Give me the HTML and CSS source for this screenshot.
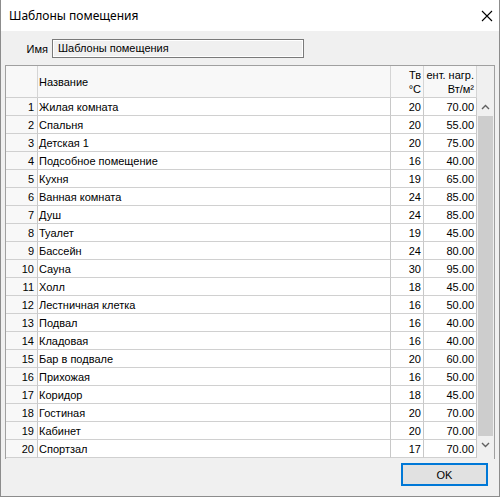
FILE: index.html
```html
<!DOCTYPE html>
<html>
<head>
<meta charset="utf-8">
<link rel="stylesheet" href="styles.css">
</head>
<body>
<div class="window">
  <div class="titlebar">
    <span class="title">Шаблоны помещения</span>
    <svg class="close" width="12" height="12" viewBox="0 0 12 12"><path d="M1 1 L11 11 M11 1 L1 11" stroke="#000" stroke-width="1.1" fill="none"/></svg>
  </div>
  <div class="body">
    <div class="name-row">
      <span class="name-label">Имя</span>
      <div class="name-input">Шаблоны помещения</div>
    </div>
    <div class="grid">
      <div class="table">
        <div class="hdr num"></div>
        <div class="hdr name">Название</div>
        <div class="hdr t">Тв<br>°С</div>
        <div class="hdr load">ент. нагр.<br>Вт/м²</div>

        <div class="c num">1</div><div class="c name">Жилая комната</div><div class="c t">20</div><div class="c load">70.00</div>
        <div class="c num">2</div><div class="c name">Спальня</div><div class="c t">20</div><div class="c load">55.00</div>
        <div class="c num">3</div><div class="c name">Детская 1</div><div class="c t">20</div><div class="c load">75.00</div>
        <div class="c num">4</div><div class="c name">Подсобное помещение</div><div class="c t">16</div><div class="c load">40.00</div>
        <div class="c num">5</div><div class="c name">Кухня</div><div class="c t">19</div><div class="c load">65.00</div>
        <div class="c num">6</div><div class="c name">Ванная комната</div><div class="c t">24</div><div class="c load">85.00</div>
        <div class="c num">7</div><div class="c name">Душ</div><div class="c t">24</div><div class="c load">85.00</div>
        <div class="c num">8</div><div class="c name">Туалет</div><div class="c t">19</div><div class="c load">45.00</div>
        <div class="c num">9</div><div class="c name">Бассейн</div><div class="c t">24</div><div class="c load">80.00</div>
        <div class="c num">10</div><div class="c name">Сауна</div><div class="c t">30</div><div class="c load">95.00</div>
        <div class="c num">11</div><div class="c name">Холл</div><div class="c t">18</div><div class="c load">45.00</div>
        <div class="c num">12</div><div class="c name">Лестничная клетка</div><div class="c t">16</div><div class="c load">50.00</div>
        <div class="c num">13</div><div class="c name">Подвал</div><div class="c t">16</div><div class="c load">40.00</div>
        <div class="c num">14</div><div class="c name">Кладовая</div><div class="c t">16</div><div class="c load">40.00</div>
        <div class="c num">15</div><div class="c name">Бар в подвале</div><div class="c t">20</div><div class="c load">60.00</div>
        <div class="c num">16</div><div class="c name">Прихожая</div><div class="c t">16</div><div class="c load">50.00</div>
        <div class="c num">17</div><div class="c name">Коридор</div><div class="c t">18</div><div class="c load">45.00</div>
        <div class="c num">18</div><div class="c name">Гостиная</div><div class="c t">20</div><div class="c load">70.00</div>
        <div class="c num">19</div><div class="c name">Кабинет</div><div class="c t">20</div><div class="c load">70.00</div>
        <div class="c num">20</div><div class="c name">Спортзал</div><div class="c t">17</div><div class="c load">70.00</div>
      </div>
      <div class="scrollbar">
        <div class="sb-top"></div>
        <div class="sb-btn"><svg width="9" height="6" viewBox="0 0 9 6"><path d="M1 5 L4.5 1.5 L8 5" stroke="#606060" stroke-width="1.4" fill="none"/></svg></div>
        <div class="sb-track"><div class="sb-thumb"></div></div>
        <div class="sb-btn"><svg width="9" height="6" viewBox="0 0 9 6"><path d="M1 1 L4.5 4.5 L8 1" stroke="#606060" stroke-width="1.4" fill="none"/></svg></div>
      </div>
    </div>
    <div class="footer">
      <button class="ok">OK</button>
    </div>
  </div>
</div>
</body>
</html>
```
FILE: styles.css
```css
html, body {
  margin: 0;
  padding: 0;
  background: #f0f0f0;
}
.window {
  width: 500px;
  height: 497px;
  box-sizing: border-box;
  border: 1px solid #8c8c8c;
  border-top: none;
  display: flex;
  flex-direction: column;
  background: #f0f0f0;
  font-family: "Liberation Sans", Arial, sans-serif;
}
.titlebar {
  height: 31px;
  flex: none;
  background: #fff;
  display: flex;
  align-items: center;
  justify-content: space-between;
  padding: 0 6px 0 8px;
}
.title {
  font-family: "Noto Sans", sans-serif;
  font-size: 12px;
  color: #000;
}
.body {
  flex: 1;
  display: flex;
  flex-direction: column;
  padding: 7px 4px 0 4px;
}
.name-row {
  display: flex;
  align-items: center;
  height: 21px;
}
.name-label {
  font-size: 11px;
  width: 43px;
  text-align: right;
  padding-right: 4px;
  color: #000;
}
.name-input {
  width: 245px;
  height: 17px;
  border: 1px solid #7a7a7a;
  box-shadow: inset 0 0 0 1px #fff;
  font-size: 11px;
  line-height: 17px;
  padding-left: 5px;
  color: #000;
}
.grid {
  margin-top: 6px;
  height: 393px;
  display: flex;
  border: 1px solid #a0a0a0;
  border-bottom: none;
  background: #f0f0f0;
}
.table {
  display: grid;
  grid-template-columns: 32px 353px 33px 53px;
  grid-template-rows: 32px repeat(20, 18px);
  align-content: start;
  font-size: 11px;
  color: #000;
}
.hdr {
  background: #f8f8f8;
  border-right: 1px solid #d5d5d5;
  border-bottom: 1px solid #d0d0d0;
  box-sizing: border-box;
  line-height: 14px;
  display: flex;
  flex-direction: column;
  justify-content: center;
  white-space: nowrap;
  overflow: hidden;
}
.hdr.name {
  padding-left: 1px;
}
.hdr.t, .hdr.load {
  text-align: right;
  padding-right: 2px;
  align-items: flex-end;
}
.c {
  background: #fff;
  border-right: 1px solid #c8c8c8;
  border-bottom: 1px solid #d0d0d0;
  box-sizing: border-box;
  line-height: 17px;
  padding-top: 1px;
  white-space: nowrap;
  overflow: hidden;
}
.c.num {
  background: #f8f8f8;
  text-align: right;
  padding-right: 3px;
}
.c.name {
  padding-left: 1px;
}
.c.t, .c.load {
  text-align: right;
  padding-right: 2px;
}
.scrollbar {
  width: 17px;
  display: flex;
  flex-direction: column;
  background: #f0f0f0;
}
.sb-top {
  height: 32px;
  background: #f0f0f0;
}
.sb-btn {
  height: 18px;
  display: flex;
  align-items: center;
  justify-content: center;
}
.sb-track {
  flex: none;
  height: 320px;
}
.sb-thumb {
  margin: 0 1px;
  height: 320px;
  background: #cdcdcd;
}
.footer {
  flex: 1;
  display: flex;
  justify-content: flex-end;
  align-items: flex-start;
  padding: 4px 7px 0 0;
}
.ok {
  width: 87px;
  height: 23px;
  border: 2px solid #0078d7;
  background: #e1e1e1;
  font-family: "Liberation Sans", Arial, sans-serif;
  font-size: 11px;
  color: #000;
  padding: 0;
}
```
